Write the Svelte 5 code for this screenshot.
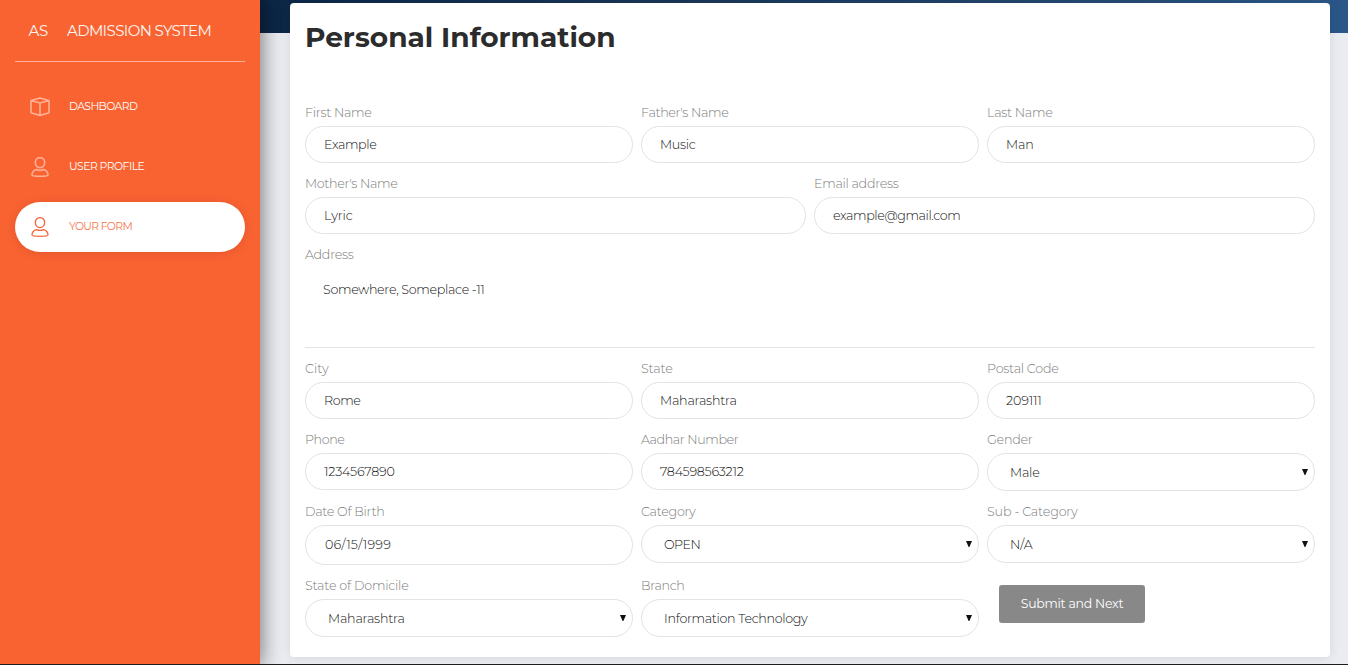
<script>
  const nav = [
    { text: 'DASHBOARD', w: 68, icon: 'box' },
    { text: 'USER PROFILE', w: 75, icon: 'user' },
    { text: 'YOUR FORM', w: 63, icon: 'user', active: true }
  ];

  const rows = [
    { cols: 'three', fields: [
      { label: 'First Name', lw: 66, value: 'Example', w: 52 },
      { label: "Father's Name", lw: 87, value: 'Music', w: 35 },
      { label: 'Last Name', lw: 65, value: 'Man', w: 27 }
    ] },
    { cols: 'two', fields: [
      { label: "Mother's Name", lw: 92, value: 'Lyric', w: 28 },
      { label: 'Email address', lw: 84, value: 'example@gmail.com', w: 127 }
    ] },
    { cols: 'one', fields: [
      { label: 'Address', lw: 48, value: 'Somewhere, Someplace -11', w: 161, kind: 'area' }
    ] },
    { cols: 'three', fields: [
      { label: 'City', lw: 23, value: 'Rome', w: 36 },
      { label: 'State', lw: 31, value: 'Maharashtra', w: 76 },
      { label: 'Postal Code', lw: 71, value: '209111', w: 35 }
    ] },
    { cols: 'three', fields: [
      { label: 'Phone', lw: 39, value: '1234567890', w: 70 },
      { label: 'Aadhar Number', lw: 97, value: '784598563212', w: 83 },
      { label: 'Gender', lw: 45, value: 'Male', w: 29, kind: 'select' }
    ] },
    { cols: 'three', fields: [
      { label: 'Date Of Birth', lw: 79, value: '06/15/1999', w: 65, kind: 'date' },
      { label: 'Category', lw: 54, value: 'OPEN', w: 36, kind: 'select' },
      { label: 'Sub - Category', lw: 90, value: 'N/A', w: 22, kind: 'select' }
    ] },
    { cols: 'three', fields: [
      { label: 'State of Domicile', lw: 103, value: 'Maharashtra', w: 76, kind: 'select' },
      { label: 'Branch', lw: 43, value: 'Information Technology', w: 143, kind: 'select' },
      { kind: 'submit' }
    ] }
  ];

  // Tracks the letters of a text so that it spans the given width.
  function track(node, width) {
    const n = node.textContent.length;
    const natural = node.getBoundingClientRect().width;
    node.style.letterSpacing = (width + 0.8 - natural) / (n - 1) + 'px';
  }
</script>

<div class="page">
  <aside>
    <div class="brand">
      <span class="mini"><span use:track={19}>AS</span></span>
      <span use:track={144}>ADMISSION SYSTEM</span>
    </div>
    <nav>
      {#each nav as item}
        <a href="#top" class:active={item.active}>
          <svg viewBox="0 0 20 20" width="20" height="20">
            {#if item.icon === 'box'}
              <path d="M10 1.1 19 3.5V15.8L10 18.6 1 15.8V3.5ZM1 3.5 10 6 19 3.5M10 6V18.6" />
            {:else}
              <ellipse cx="10" cy="5.6" rx="4.7" ry="5" />
              <path d="M6.3 12.6C3.7 13.5 2 15.5 2 18.1Q2 19.3 10 19.3T18 18.1C18 15.5 16.3 13.5 13.7 12.6Q10 14.3 6.3 12.6Z" />
            {/if}
          </svg>
          <span use:track={item.w}>{item.text}</span>
        </a>
      {/each}
    </nav>
  </aside>

  <main>
    <div class="band"></div>
    <section class="card">
      <h1>Personal Information</h1>
      <form>
        {#each rows as row}
          <div class="row {row.cols}">
            {#each row.fields as f}
              {#if f.kind === 'submit'}
                <button type="button"><span use:track={102}>Submit and Next</span></button>
              {:else}
                <div class="field">
                  <div class="label"><span use:track={f.lw}>{f.label}</span></div>
                  <div class="control {f.kind ?? 'input'}">
                    <span use:track={f.w}>{f.value}</span>
                    {#if f.kind === 'select'}
                      <svg class="arrow" viewBox="0 0 6 6" width="6" height="6"><path d="M0 0H6L3.4 6H2.6Z" /></svg>
                    {/if}
                  </div>
                </div>
              {/if}
            {/each}
          </div>
        {/each}
      </form>
    </section>
  </main>
  <div class="edge"></div>
</div>

<style>
  :global(body) { margin: 0; overflow: hidden; }
  .page {
    display: grid;
    grid-template: 664px 1px / 260px 1fr;
    width: 1348px;
    height: 665px;
    font-family: Montserrat, Inter, sans-serif;
    background: #ebecf1;
    overflow: hidden;
  }
  span { white-space: pre; }
  aside {
    box-sizing: border-box;
    padding: 0 15px;
    background: #f96332;
    box-shadow: 0 2px 22px rgba(0, 0, 0, .2), 0 2px 20px rgba(0, 0, 0, .4);
    z-index: 1;
  }
  .brand {
    display: flex;
    box-sizing: border-box;
    height: 62px;
    padding: 0 0 1px 13.5px;
    border-bottom: 1px solid rgba(255, 255, 255, .5);
    color: #fff5f0;
    font-size: 15px;
    line-height: 61px;
  }
  .mini { width: 38.5px; }
  nav {
    display: flex;
    flex-direction: column;
    gap: 10px;
    padding-top: 20px;
  }
  a {
    display: flex;
    align-items: center;
    box-sizing: border-box;
    height: 50px;
    padding-left: 15px;
    gap: 19px;
    border-radius: 25px;
    color: #fff;
    font-size: 10.8px;
    line-height: 20px;
    text-decoration: none;
  }
  a span { padding-bottom: 1px; }
  a svg {
    fill: none;
    stroke: #ffb196;
    stroke-width: 1.6;
    stroke-linejoin: round;
  }
  a.active {
    background: #fff;
    color: #f5764c;
    box-shadow: 0 1px 10px rgba(90, 20, 0, .15);
  }
  a.active svg { stroke: #f2683f; stroke-width: 1.3; }
  main {
    display: grid;
    grid-template: 33px 1fr / 1fr;
    min-width: 0;
  }
  .band {
    grid-area: 1 / 1;
    background: linear-gradient(90deg, #0c2646 0%, #204065 60%, #2a5788 100%);
  }
  .card {
    grid-area: 1 / 1 / 3 / 2;
    box-sizing: border-box;
    margin: 3px 18px 7px 30px;
    padding: 0 15px;
    border-radius: 4px;
    background: #fff;
    box-shadow: 0 1px 12px rgba(0, 0, 0, .09);
  }
  h1 {
    height: 69px;
    margin: 0;
    color: #2c2c2c;
    font-size: 28px;
    font-weight: 700;
    line-height: 69px;
  }
  form {
    display: flex;
    flex-direction: column;
    gap: 10px;
    padding-top: 30px;
  }
  .row { display: grid; gap: 8px; align-items: start; }
  .three { grid-template-columns: 328px 338px 328px; }
  .two { grid-template-columns: 1fr 1fr; }
  .label {
    height: 24px;
    color: #7c7c7c;
    font-size: 12.7px;
    font-weight: 300;
    line-height: 21px;
  }
  .control {
    display: flex;
    align-items: center;
    justify-content: space-between;
    box-sizing: border-box;
    height: 37px;
    padding: 0 18px 1px 18px;
    border: 1px solid #e3e3e3;
    border-radius: 20px;
    color: #111;
    font-size: 12.7px;
    font-weight: 300;
  }
  .select { height: 38px; padding: 0 6px 0 22px; }
  .date { height: 40px; padding-left: 19px; }
  .area {
    align-items: flex-start;
    height: 80px;
    padding: 13px 18px;
    border-width: 0 0 1px;
    border-radius: 0;
    line-height: 18px;
  }
  .arrow { fill: #111; }
  button {
    width: 146px;
    height: 38px;
    margin: 10px 0 0 12px;
    padding: 0 0 1px;
    border: 0;
    border-radius: 3px;
    background: #888;
    color: #fff;
    font: 400 12.5px Montserrat, Inter, sans-serif;
  }
  .edge { grid-column: 1 / 3; background: #211c22; z-index: 2; }
</style>
